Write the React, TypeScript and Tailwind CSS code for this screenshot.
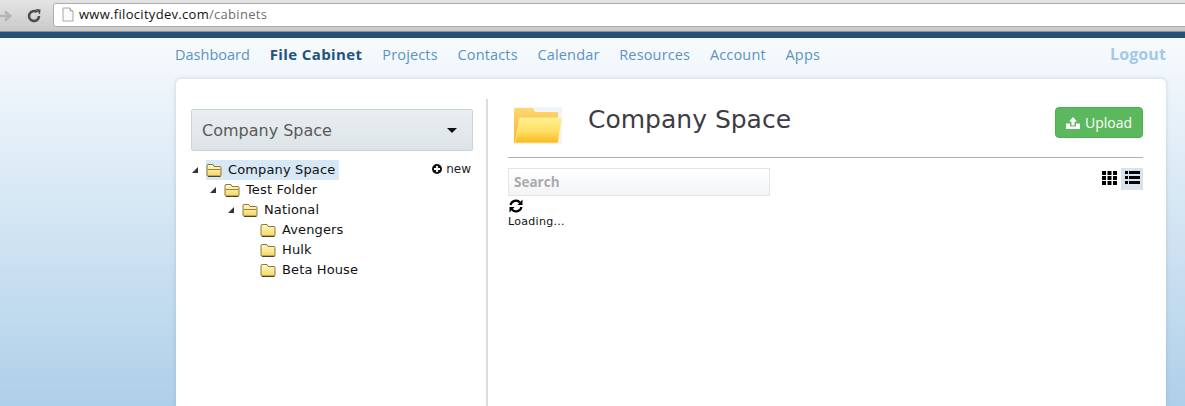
import React from "react";

const SmallFolder = ({ open = false }: { open?: boolean }) => (
  <svg width="16" height="14" viewBox="0 0 16 14" className="shrink-0">
    <defs>
      <linearGradient id="sf" x1="0" y1="0" x2="0" y2="1">
        <stop offset="0" stopColor="#fff9c4" />
        <stop offset="1" stopColor="#f6d667" />
      </linearGradient>
    </defs>
    <path d="M1 3 L1 12 Q1 13 2 13 L14 13 Q15 13 15 12 L15 4.5 Q15 3.5 14 3.5 L8 3.5 L7 1.5 L2 1.5 Q1 1.5 1 3 Z" fill="url(#sf)" stroke="#8c7a3c" strokeWidth="1" />
    {open && <path d="M1.5 6.5 L14.5 6.5" stroke="#9a8540" strokeWidth="1" />}
    <path d="M2 13.5 L14.5 13.5" stroke="#4a442a" strokeWidth="1" />
  </svg>
);

const Caret = () => (
  <svg width="8" height="8" viewBox="0 0 8 8" className="shrink-0">
    <path d="M7 1 L7 7 L1 7 Z" fill="#333" />
  </svg>
);

const TreeRow = ({ indent, label, open, selected }: { indent: string; label: string; open?: boolean; selected?: boolean }) => (
  <div className={`flex items-center h-5 ${indent}`}>
    <div className="w-[15px] flex items-center">{open && <Caret />}</div>
    <div className={`flex items-center h-5 pr-[4px] ${selected ? "bg-[#d6e8f5]" : ""}`}>
      <SmallFolder open={open} />
      <span className="ml-[6px] text-[13px] tracking-[0.13px] text-[#111]">{label}</span>
    </div>
  </div>
);

const navItems = ["Dashboard", "File Cabinet", "Projects", "Contacts", "Calendar", "Resources", "Account", "Apps"];

export default function App() {
  return (
    <div className="w-[1185px] h-[406px] overflow-hidden flex flex-col bg-gradient-to-b from-white to-[#aecfe9] font-['DejaVu_Sans',sans-serif]">
      <div className="h-[32px] shrink-0 flex items-center bg-gradient-to-b from-[#e4e4e4] to-[#c9c9c9] border-b border-[#8f8f8f]">
        <svg width="16" height="14" viewBox="0 0 16 14" className="-ml-[2px] shrink-0">
          <path d="M1 7 H11 M7 2.5 L12 7 L7 11.5" fill="none" stroke="#b4b4b4" strokeWidth="2.6" />
        </svg>
        <svg width="16" height="16" viewBox="0 0 16 16" className="ml-[12px] shrink-0">
          <path d="M13 8 A5 5 0 1 1 11 4" fill="none" stroke="#4c4c4c" strokeWidth="2.6" />
          <path d="M9.5 1 L14.5 1.5 L14 6.5 Z" fill="#4c4c4c" />
        </svg>
        <div className="ml-[11px] flex-1 h-[24px] -mr-[4px] mt-[-2px] bg-white border border-[#adadad] rounded-[3px] flex items-center pl-[8px]">
          <svg width="12" height="15" viewBox="0 0 12 15" className="shrink-0">
            <path d="M1 1 H8 L11 4 V14 H1 Z" fill="#fafafa" stroke="#a8a8a8" />
            <path d="M8 1 V4 H11" fill="#e4e4e4" stroke="#a8a8a8" />
          </svg>
          <span className="ml-[5px] text-[13px] text-[#111] font-['Open_Sans',sans-serif] tracking-[0.3px]">
            www.filocitydev.com<span className="text-[#6f6f6f]">/cabinets</span>
          </span>
        </div>
      </div>
      <div className="h-[6px] shrink-0 bg-[#24527a]" />
      <nav className="h-[41px] shrink-0 flex items-center pl-[175px] pr-[19px] pb-[9px] font-['Open_Sans',sans-serif] text-[14.5px]">
        <div className="flex items-baseline gap-[19.8px]">
          {navItems.map((n) => (
            <a key={n} className={n === "File Cabinet" ? "font-bold text-[#24527a] text-[15px] tracking-[0.4px]" : n === "Dashboard" ? "text-[#5b92c3]" : "text-[#5b92c3] tracking-[0.15px]"}>{n}</a>
          ))}
        </div>
        <a className="ml-auto font-bold text-[16px] tracking-[0.1px] text-[#a3c9e8]">Logout</a>
      </nav>
      <main className="ml-[176px] w-[990px] flex-1 bg-white rounded-t-[5px] shadow-[0_0_4px_rgba(120,140,160,0.35)] flex pl-[15px] pr-[23px] pt-[20px]">
        <aside className="w-[282px] shrink-0">
          <div className="h-[42px] mt-[10px] bg-gradient-to-b from-[#e9eef1] to-[#dde4e8] border border-[#ccd3d6] rounded-[2px] flex items-center justify-between pl-[10px] pr-[15px]">
            <span className="text-[16px] text-[#5a5a5a] pt-[1px]">Company Space</span>
            <span className="w-0 h-0 border-x-[5px] border-x-transparent border-t-[5px] border-t-[#111]" />
          </div>
          <div className="relative mt-[9px]">
            <TreeRow indent="" label="Company Space" open selected />
            <TreeRow indent="pl-[18px]" label="Test Folder" open />
            <TreeRow indent="pl-[36px]" label="National" open />
            <TreeRow indent="pl-[54px]" label="Avengers" />
            <TreeRow indent="pl-[54px]" label="Hulk" />
            <TreeRow indent="pl-[54px]" label="Beta House" />
            <div className="absolute right-[2px] -top-[1px] h-5 flex items-center gap-[4px] text-[12px] text-[#222]">
              <svg width="10" height="10" viewBox="0 0 10 10">
                <circle cx="5" cy="5" r="5" fill="#111" />
                <path d="M5 2 V8 M2 5 H8" stroke="#fff" strokeWidth="1.8" />
              </svg>
              new
            </div>
          </div>
        </aside>
        <div className="w-[2px] ml-[13px] bg-[#dcdcdc] shrink-0" />
        <section className="ml-[20px] flex-1">
          <div className="h-[59px] flex items-start border-b border-[#b0b0b0]">
            <svg width="48" height="37" viewBox="0 0 48 37" className="ml-[6px] mt-[8px] shrink-0">
              <defs>
                <linearGradient id="bb" x1="0" y1="0" x2="0" y2="1">
                  <stop offset="0" stopColor="#fdd673" />
                  <stop offset="1" stopColor="#fdb520" />
                </linearGradient>
                <linearGradient id="bf" x1="0" y1="0" x2="0" y2="1">
                  <stop offset="0" stopColor="#fff08a" />
                  <stop offset="0.5" stopColor="#ffe06a" />
                  <stop offset="1" stopColor="#fdb71c" />
                </linearGradient>
              </defs>
              <rect x="0" y="0" width="48" height="37" fill="#f1f5f8" />
              <path d="M0 3 Q0 1 2 1 L19 1 L21 5 L44 5 L44 36 L0 36 Z" fill="url(#bb)" />
              <path d="M6 11 L48 11 L44 36 L1 36 Z" fill="url(#bf)" stroke="#fff3c0" strokeWidth="0.7" />
            </svg>
            <h1 className="ml-[26px] mt-[3px] text-[25px] leading-[36px] text-[#3d3d44]">Company Space</h1>
            <button className="ml-auto w-[88px] h-[31px] mt-[8px] bg-[#5cb85c] border border-[#4cae4c] rounded-[4px] flex items-center justify-center gap-[5px] text-white text-[14px] font-['Open_Sans',sans-serif]">
              <svg width="14" height="12" viewBox="0 0 14 12">
                <path d="M7 0 L11 4.5 H8.6 V8.5 H5.4 V4.5 H3 Z M0 6.5 H4 V9.5 H10 V6.5 H14 V12 H0 Z" fill="#fff" />
              </svg>
              Upload
            </button>
          </div>
          <div className="flex justify-between mt-[10px]">
            <div className="w-[262px] h-[28px] border border-[#e6e3e5] bg-gradient-to-b from-white to-[#f2f4f7] pl-[5px] flex items-center text-[13.5px] font-bold text-[#aaaaaa] font-['Open_Sans',sans-serif]">Search</div>
            <div className="flex items-start h-[22px]">
              <svg width="15" height="14" viewBox="0 0 15 14" className="mt-[3px]">
                <path d="M0 0 H4 V4 H0 Z M5.5 0 H9.5 V4 H5.5 Z M11 0 H15 V4 H11 Z M0 5 H4 V9 H0 Z M5.5 5 H9.5 V9 H5.5 Z M11 5 H15 V9 H11 Z M0 10 H4 V14 H0 Z M5.5 10 H9.5 V14 H5.5 Z M11 10 H15 V14 H11 Z" fill="#000" />
              </svg>
              <div className="ml-[4px] w-[22px] h-[22px] bg-[#d8e3ed] flex items-start pt-[3px] justify-center">
                <svg width="15" height="13" viewBox="0 0 15 13">
                  <path d="M0 0 H3 V3 H0 Z M4 0 H15 V3 H4 Z M0 5 H3 V8 H0 Z M4 5 H15 V8 H4 Z M0 10 H3 V13 H0 Z M4 10 H15 V13 H4 Z" fill="#000" />
                </svg>
              </div>
            </div>
          </div>
          <svg width="16" height="14" viewBox="0 0 16 14" className="mt-[3px]">
            <path d="M2.5 6 A5.5 5.5 0 0 1 12 3.5" fill="none" stroke="#000" strokeWidth="2.2" />
            <path d="M14.5 0.5 V6 H9.5 Z" fill="#000" />
            <path d="M13.5 8 A5.5 5.5 0 0 1 4 10.5" fill="none" stroke="#000" strokeWidth="2.2" />
            <path d="M1.5 13.5 V8 H6.5 Z" fill="#000" />
          </svg>
          <div className="mt-[2px] text-[11px] leading-[14px] text-[#111] tracking-[0.3px]">Loading...</div>
        </section>
      </main>
    </div>
  );
}
